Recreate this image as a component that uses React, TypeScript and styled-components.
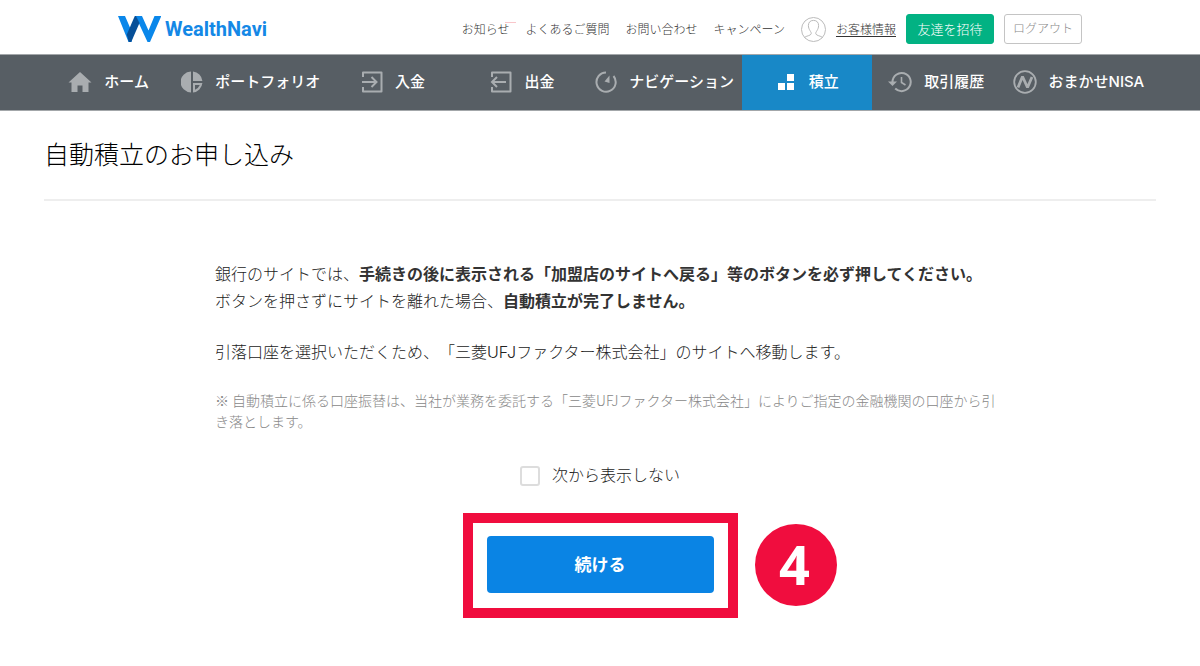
import React from 'react';
import styled, { createGlobalStyle } from 'styled-components';

const GlobalStyle = createGlobalStyle`
  *, *::before, *::after { box-sizing: border-box; }
  body {
    margin: 0;
    background: #fff;
    color: #222;
    font-family: Inter, "Noto Sans CJK JP", sans-serif;
    font-size: 16px;
    font-weight: 300;
    text-spacing-trim: space-all;
  }
  ul, p, h1 { margin: 0; padding: 0; }
  ul { list-style: none; }
  button { font-family: inherit; cursor: pointer; }
`;

const Header = styled.header`
  display: flex;
  align-items: center;
  justify-content: space-between;
  max-width: 964px;
  height: 54px;
  margin: 0 auto;
  padding-top: 4px;
`;

const Logo = styled.a`
  display: flex;
  align-items: center;
  gap: 4px;
  color: #1488e6;
  font-family: Roboto, sans-serif;
  font-size: 20px;
  font-weight: 700;
  line-height: 24px;
  text-decoration: none;
`;

const Utilities = styled.div`
  display: flex;
  align-items: center;
  gap: 10px;
`;

const LinkList = styled.ul`
  display: flex;
  gap: 16px;
  margin-right: 6px;
`;

const UtilityLink = styled.a<{ $marked?: boolean; $underlined?: boolean }>`
  display: block;
  position: relative;
  padding-top: 2px;
  color: #333;
  font-size: 12px;
  line-height: 18px;
  white-space: nowrap;
  text-decoration: ${p => (p.$underlined ? 'underline' : 'none')};
  text-underline-offset: 2px;

  &::after {
    content: "";
    display: ${p => (p.$marked ? 'block' : 'none')};
    position: absolute;
    top: 3px;
    right: -6px;
    width: 11px;
    height: 1px;
    background: #f9c6ca;
  }
`;

const SmallButton = styled.button<{ $filled?: boolean }>`
  height: 30px;
  padding: 0;
  width: ${p => (p.$filled ? '88px' : '78px')};
  border: 1px solid ${p => (p.$filled ? '#02b283' : '#c4c4c4')};
  border-radius: 3px;
  background: ${p => (p.$filled ? '#02b283' : '#fff')};
  color: ${p => (p.$filled ? '#fff' : '#888')};
  font-size: ${p => (p.$filled ? '13px' : '12px')};
  font-weight: 300;
  line-height: 18px;
`;

const Nav = styled.nav`
  padding: 0 44px;
  border-top: 1px solid #a3a7aa;
  border-bottom: 1px solid #a3a7aa;
  background: #575e64;
`;

const NavList = styled.ul`
  display: grid;
  grid-template-columns: 5fr 6fr 5fr 5fr 6fr 5fr 5fr 6fr;
`;

const NavLink = styled.a<{ $active?: boolean }>`
  display: flex;
  align-items: center;
  justify-content: center;
  gap: 12px;
  height: 55px;
  padding-bottom: 1px;
  background: ${p => (p.$active ? '#1888c7' : 'transparent')};
  color: #fff;
  font-size: 15px;
  font-weight: 500;
  line-height: 22px;
  white-space: nowrap;
  text-decoration: none;

  svg {
    flex: none;
    color: ${p => (p.$active ? '#fff' : '#a9adb0')};
  }
`;

const Main = styled.main`
  padding: 25px 44px 48px;
`;

const Title = styled.h1`
  padding-bottom: 25px;
  border-bottom: 2px solid #eee;
  color: #000;
  font-size: 25px;
  font-weight: 300;
  line-height: 38px;
`;

const Content = styled.section`
  display: flex;
  flex-direction: column;
  gap: 24px;
  max-width: 770px;
  margin: 60px auto 0;
`;

const Paragraph = styled.p`
  line-height: 27px;

  strong {
    color: #333;
    font-weight: 700;
  }
`;

const Note = styled.p`
  margin-right: -32px;
  color: #888;
  font-family: "Noto Sans CJK JP", sans-serif;
  font-size: 14px;
  line-height: 21px;
`;

const CheckLabel = styled.label`
  display: flex;
  align-items: center;
  justify-content: center;
  gap: 12px;
  padding-top: 6px;
  line-height: 27px;
`;

const Checkbox = styled.input`
  appearance: none;
  width: 20px;
  height: 20px;
  margin: 0;
  border: 2px solid #ddd;
  border-radius: 3px;
  background: #fff;

  &:checked { background: #0a84e4; }
`;

const Highlight = styled.div`
  position: relative;
  align-self: center;
  padding: 13px 14px 15px;
  border: 10px solid #f00d3e;
`;

const SubmitButton = styled.button`
  display: block;
  width: 227px;
  height: 57px;
  padding: 0 0 2px;
  border: 0;
  border-radius: 4px;
  background: #0a84e4;
  color: #fff;
  font-size: 17px;
  font-weight: 700;
`;

const StepBadge = styled.span`
  position: absolute;
  top: 1px;
  left: calc(100% + 27px);
  width: 82px;
  height: 82px;
  padding-right: 2px;
  border-radius: 50%;
  background: #f00d3e;
  color: #fff;
  font-family: "Open Sans", sans-serif;
  font-size: 54px;
  font-weight: 700;
  line-height: 80px;
  text-align: center;
`;

const LogoMark = () => (
  <svg width="43" height="27" viewBox="0 0 43 27" aria-hidden="true">
    <path d="M0 0H7L13.5 15L17 10L13.5 26H10.5Z" fill="#0a87ea" />
    <path d="M17.5 0H24L30.5 14.5L36.5 0H43.3L32 26H29.5Z" fill="#0a87ea" />
    <path d="M16.8 0H18L21.5 7L13.2 26H10.8L8.8 18.5Z" fill="#064f98" />
  </svg>
);

const Avatar = () => (
  <svg width="25" height="25" viewBox="0 0 25 25" fill="none" stroke="#bbb" aria-hidden="true">
    <circle cx="12.5" cy="12.5" r="12" />
    <path d="M3.5 20.5C5 18.8 9.8 18.8 10.2 16.8C10.4 15.4 9.7 14.9 9 13.6C8.1 12 7.4 10.7 7.4 8.6C7.4 5.4 9.2 3.4 12.5 3.4C15.8 3.4 17.6 5.4 17.6 8.6C17.6 10.7 16.9 12 16 13.6C15.3 14.9 14.6 15.4 14.8 16.8C15.2 18.8 20 18.8 21.5 20.5" />
  </svg>
);

const HomeIcon = () => (
  <svg width="24" height="22" viewBox="0 0 24 22" fill="currentColor" aria-hidden="true">
    <path d="M12 1L23.5 11.5H20.5V21H14.5V14.5H9.5V21H3.5V11.5H.5Z" />
  </svg>
);

const PieIcon = () => (
  <svg width="22" height="22" viewBox="0 0 22 22" fill="currentColor" aria-hidden="true">
    <path d="M10 .6V21.4A10.4 10.4 0 0 1 10 .6ZM12 .6A10.5 10.5 0 0 1 21.4 10H12Z" />
    <path d="M12 12H21.4A10.5 10.5 0 0 1 12 21.4ZM14 14V18.8A8.5 8.5 0 0 0 18.8 14Z" fillRule="evenodd" />
  </svg>
);

const DepositIcon = () => (
  <svg width="22" height="22" viewBox="0 0 22 22" fill="none" stroke="currentColor" strokeWidth="2" aria-hidden="true">
    <path d="M2 6V1.5H20.5V20.5H2V16" strokeLinejoin="round" />
    <path d="M1 11H15M10.5 6L15.5 11L10.5 16" />
  </svg>
);

const WithdrawIcon = () => (
  <svg width="22" height="22" viewBox="0 0 22 22" fill="none" stroke="currentColor" strokeWidth="2" aria-hidden="true">
    <path d="M2 6V1.5H20.5V20.5H2V16" strokeLinejoin="round" />
    <path d="M16 11H2M7 6L2 11L7 16" />
  </svg>
);

const CompassIcon = () => (
  <svg width="22" height="22" viewBox="0 0 22 22" fill="none" stroke="currentColor" strokeWidth="2" aria-hidden="true">
    <path d="M11 1.5A9.6 9.6 0 1 0 18.5 5" />
    <path d="M14.5 4.5V12L9.5 10.5Z" fill="currentColor" stroke="none" />
  </svg>
);

const BlocksIcon = () => (
  <svg width="22" height="22" viewBox="0 0 22 22" fill="currentColor" aria-hidden="true">
    <path d="M12 3H19V10H12ZM3 12H10V19H3ZM12 12H19V19H12Z" />
  </svg>
);

const HistoryIcon = () => (
  <svg width="24" height="22" viewBox="0 0 24 22" fill="none" stroke="currentColor" strokeWidth="2" aria-hidden="true">
    <path d="M4.5 12V10.8A9.1 9.1 0 1 1 7.2 17.5" />
    <path d="M0 10.5H9L4.5 15Z" fill="currentColor" stroke="none" />
    <path d="M13.5 6V11.5L17.5 14" strokeWidth="1.6" />
  </svg>
);

const NisaIcon = () => (
  <svg width="24" height="24" viewBox="0 0 24 24" fill="none" stroke="currentColor" aria-hidden="true">
    <circle cx="12" cy="12" r="10.8" strokeWidth="1.8" />
    <path d="M5 17.5L9.5 6.5L14.5 17.5L19 7" strokeWidth="2.8" strokeLinejoin="bevel" />
  </svg>
);

const links = ['お知らせ', 'よくあるご質問', 'お問い合わせ', 'キャンペーン'];

const navItems = [
  { label: 'ホーム', Icon: HomeIcon },
  { label: 'ポートフォリオ', Icon: PieIcon },
  { label: '入金', Icon: DepositIcon },
  { label: '出金', Icon: WithdrawIcon },
  { label: 'ナビゲーション', Icon: CompassIcon },
  { label: '積立', Icon: BlocksIcon, active: true },
  { label: '取引履歴', Icon: HistoryIcon },
  { label: 'おまかせNISA', Icon: NisaIcon },
];

export default function App() {
  return (
    <div lang="ja">
      <GlobalStyle />
      <Header>
        <Logo href="#"><LogoMark />WealthNavi</Logo>
        <Utilities>
          <LinkList>
            {links.map((label, i) => (
              <li key={label}><UtilityLink href="#" $marked={i === 0}>{label}</UtilityLink></li>
            ))}
          </LinkList>
          <Avatar />
          <UtilityLink href="#" $underlined>お客様情報</UtilityLink>
          <SmallButton type="button" $filled>友達を招待</SmallButton>
          <SmallButton type="button">ログアウト</SmallButton>
        </Utilities>
      </Header>
      <Nav>
        <NavList>
          {navItems.map(({ label, Icon, active }) => (
            <li key={label}>
              <NavLink href="#" $active={active} aria-current={active ? 'page' : undefined}>
                <Icon />
                {label}
              </NavLink>
            </li>
          ))}
        </NavList>
      </Nav>
      <Main>
        <Title>自動積立のお申し込み</Title>
        <Content>
          <Paragraph>
            銀行のサイトでは、<strong>手続きの後に表示される「加盟店のサイトへ戻る」等のボタンを必ず押してください。</strong>
            <br />
            ボタンを押さずにサイトを離れた場合、<strong>自動積立が完了しません。</strong>
          </Paragraph>
          <Paragraph>引落口座を選択いただくため、「三菱UFJファクター株式会社」のサイトへ移動します。</Paragraph>
          <Note>
            ※ 自動積立に係る口座振替は、当社が業務を委託する「三菱UFJファクター株式会社」によりご指定の金融機関の口座から引
            <br />
            き落とします。
          </Note>
          <CheckLabel>
            <Checkbox type="checkbox" />
            次から表示しない
          </CheckLabel>
          <Highlight>
            <SubmitButton type="button">続ける</SubmitButton>
            <StepBadge>4</StepBadge>
          </Highlight>
        </Content>
      </Main>
    </div>
  );
}
